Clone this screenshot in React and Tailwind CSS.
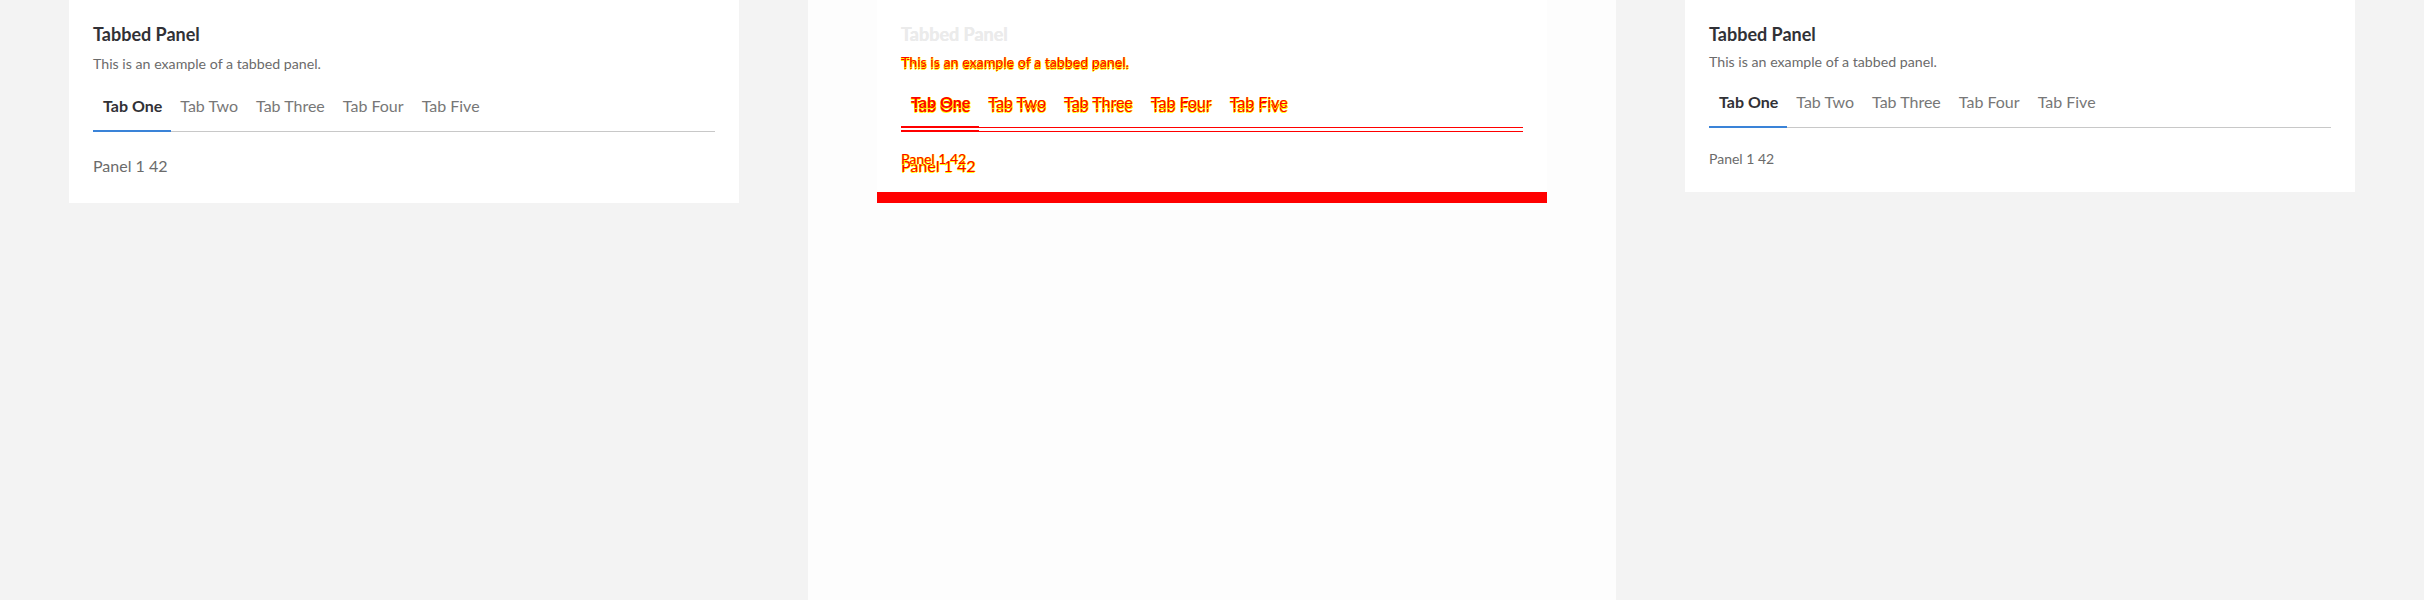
import React from 'react';

const tabs = ['Tab One', 'Tab Two', 'Tab Three', 'Tab Four', 'Tab Five'];

// spacing for the two renders that are being compared
const variants = {
    a: { desc: 'mt-[4px]', tabs: 'mt-[6px]', panel: 'pt-[22px] pb-[25px] text-[16px] leading-[24px]' },
    b: { desc: 'mt-[2px]', tabs: 'mt-[4px]', panel: 'pt-[20px] pb-[23px] text-[14px] leading-[21px]' },
};

const diffText = 'text-[#ff0000] [text-shadow:1px_0_0_#ffff00,0_1px_0_#ffff00]';

function PanelBody({ v, diff }) {
    const s = variants[v];
    return (
        <div className="pt-5 px-6 font-[Lato,sans-serif]">
            <h2 className={`text-[18px] leading-[28px] font-bold ${diff ? 'text-[#ebebeb]' : 'text-[#313136]'}`}>
                Tabbed Panel
            </h2>
            <p className={`${s.desc} text-[14.2px] leading-[24px] ${diff ? diffText : 'text-[#6b6b6b]'}`}>
                This is an example of a tabbed panel.
            </p>
            <div className={`${s.tabs} flex border-b ${diff ? 'border-[#ff0000]' : 'border-[#c8c8c8]'}`}>
                {tabs.map((t, i) => (
                    <button
                        key={t}
                        className={`px-[9px] py-3 text-[16px] leading-[24px] border-b-2 -mb-px ${
                            i === 0
                                ? `font-bold pl-[10px] ${diff ? 'border-[#ff0000]' : 'border-[#3a83d8] text-[#313136]'}`
                                : `border-transparent ${diff ? '' : 'text-[#777777]'}`
                        } ${diff ? diffText : ''}`}
                    >
                        {t}
                    </button>
                ))}
            </div>
            <div className={`${s.panel} ${diff ? diffText : 'text-[#6b6b6b]'}`}>Panel 1 42</div>
        </div>
    );
}

function DiffCard() {
    return (
        <div className="relative w-[670px] mx-[69px]">
            <div className="h-[192px] bg-white" />
            <div className="h-[11px] bg-[#ff0000]" />
            <div className="absolute inset-0">
                <PanelBody v="a" diff />
            </div>
            <div className="absolute inset-0">
                <PanelBody v="b" diff />
            </div>
        </div>
    );
}

export default function App() {
    return (
        <div className="flex w-[2424px] h-[600px] overflow-hidden">
            <div className="w-[808px] h-full bg-[#f3f3f3]">
                <div className="w-[670px] mx-[69px] bg-white">
                    <PanelBody v="a" />
                </div>
            </div>
            <div className="w-[808px] h-full bg-[#fdfdfd]">
                <DiffCard />
            </div>
            <div className="w-[808px] h-full bg-[#f3f3f3]">
                <div className="w-[670px] mx-[69px] bg-white">
                    <PanelBody v="b" />
                </div>
            </div>
        </div>
    );
}
